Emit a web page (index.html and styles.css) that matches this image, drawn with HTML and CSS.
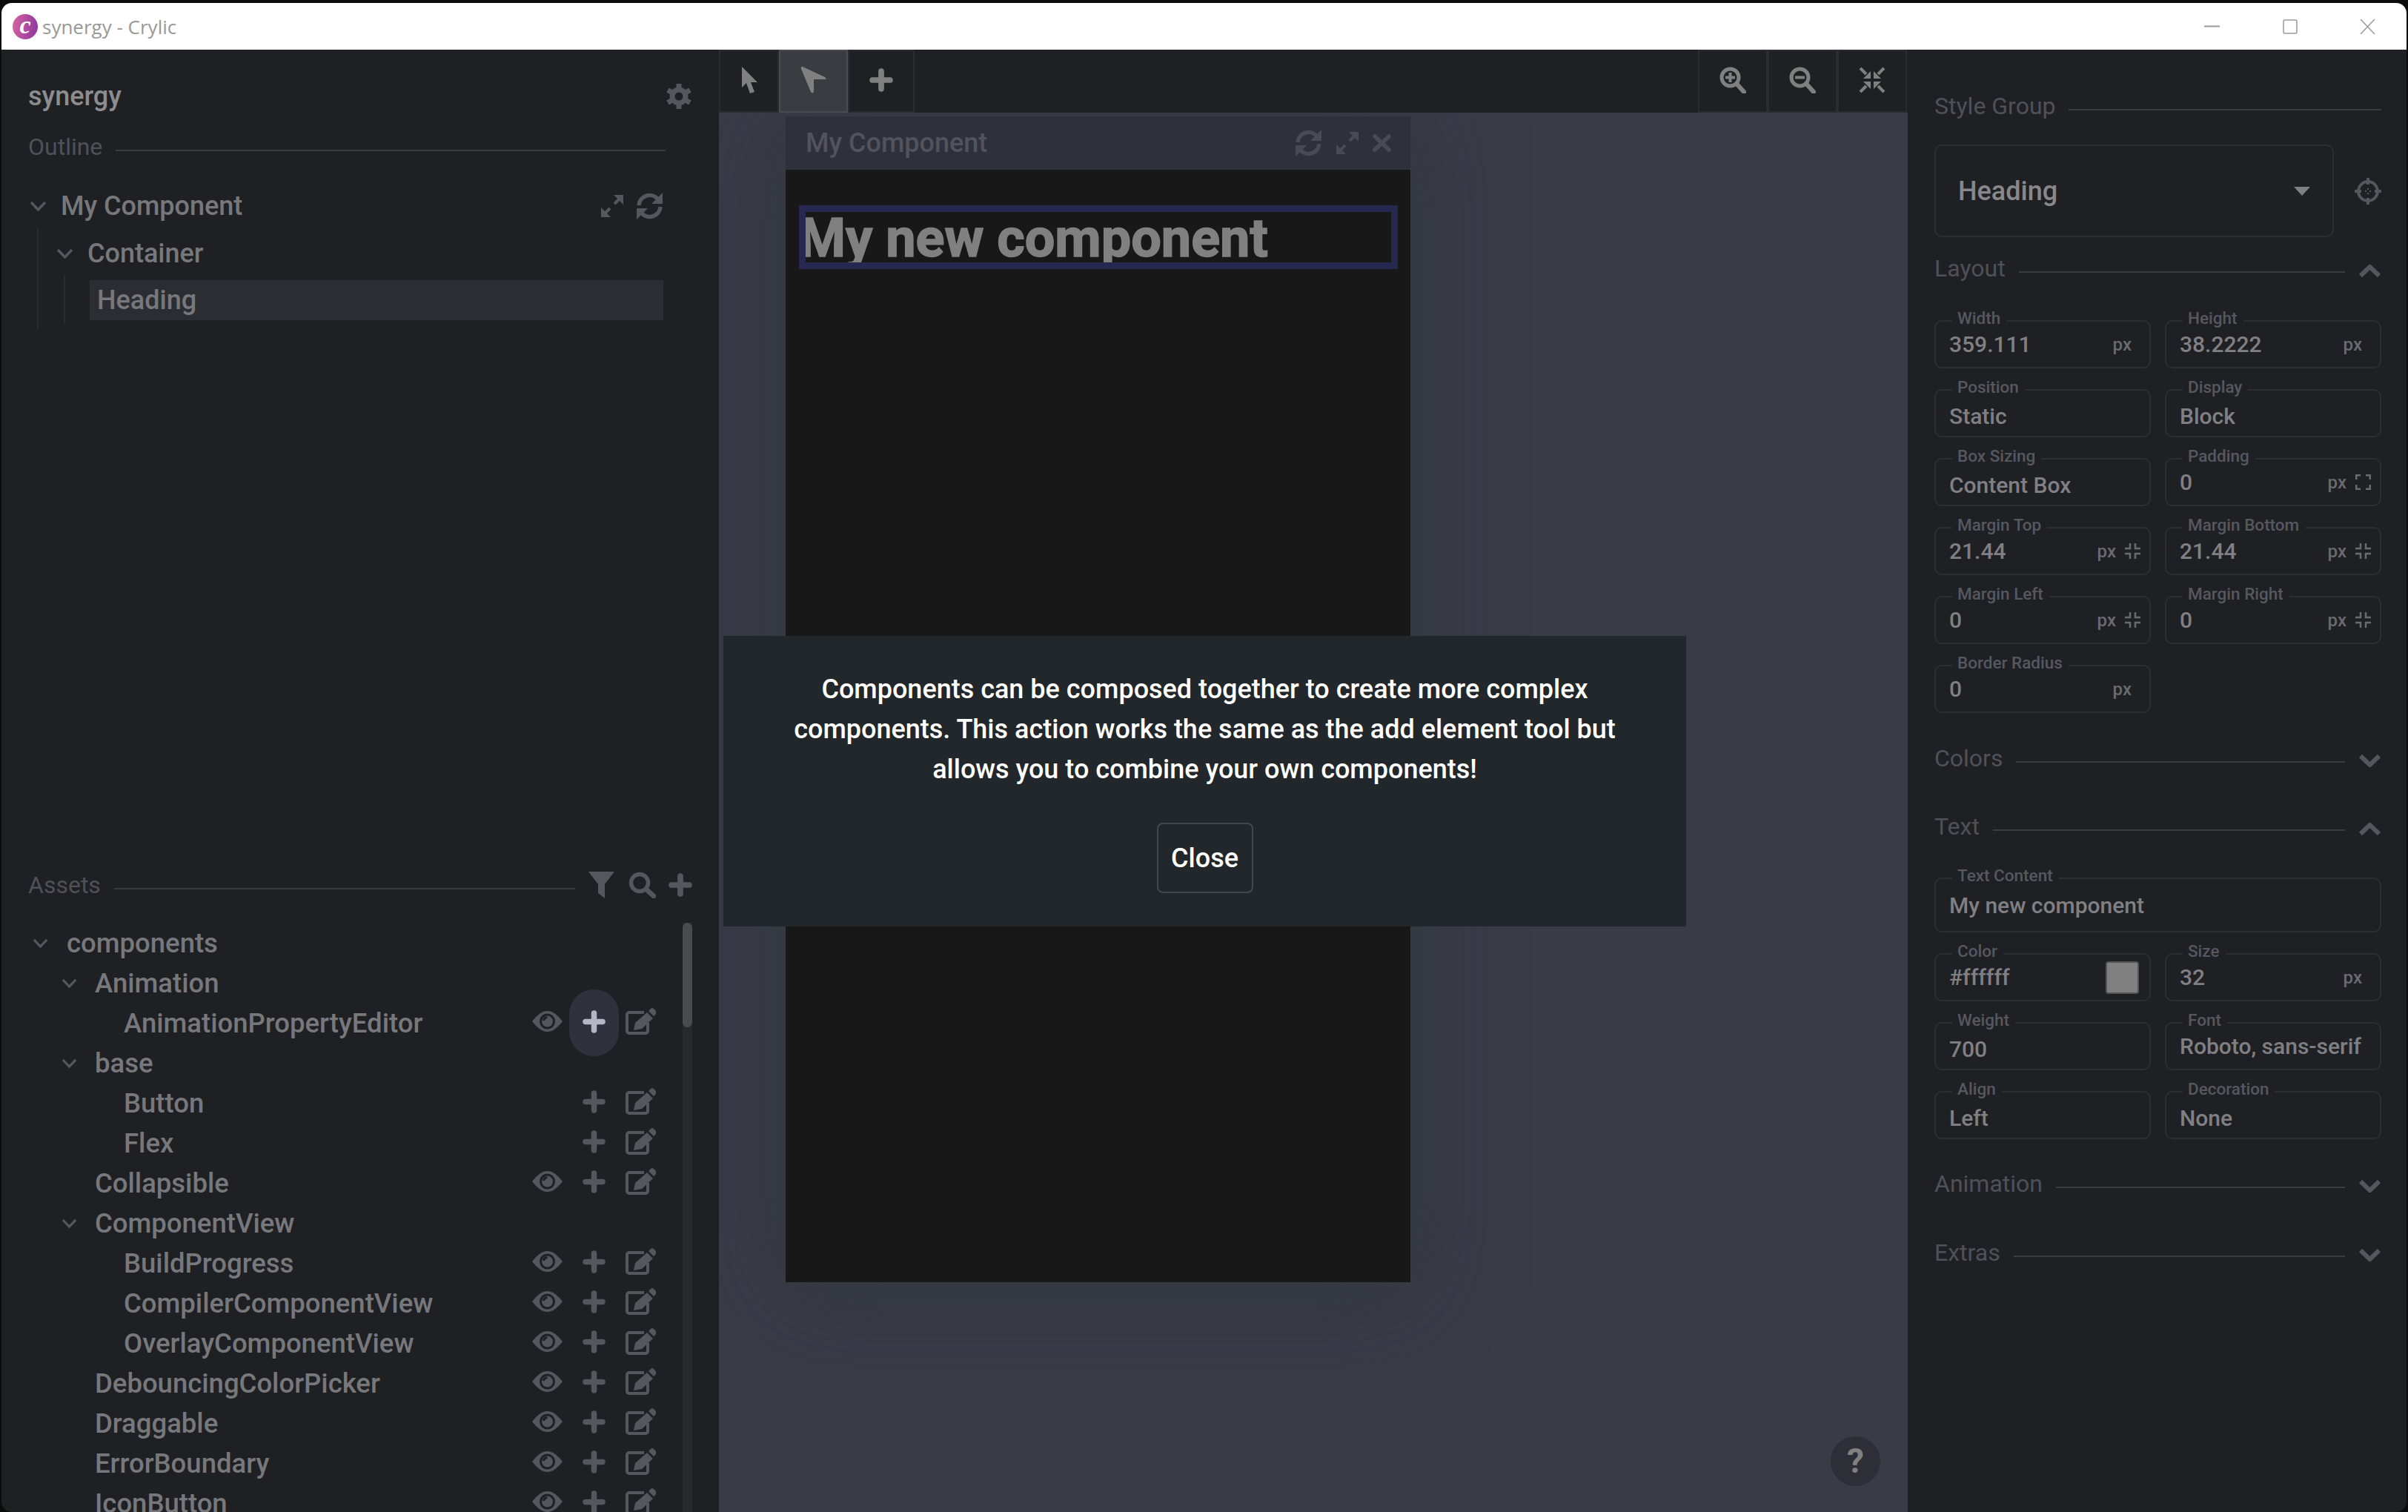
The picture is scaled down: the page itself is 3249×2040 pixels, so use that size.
FILE: index.html
```html
<!DOCTYPE html>
<html lang="en">
<head>
<meta charset="UTF-8">
<title>synergy - Crylic</title>
<link rel="stylesheet" href="styles.css">
</head>
<body>
<svg class="sprite" xmlns="http://www.w3.org/2000/svg">
    <symbol id="i-plus" viewBox="0 0 31 31"><path d="M15.5 4v23M4 15.5h23" fill="none" stroke="currentColor" stroke-width="7.5" stroke-linecap="round"/></symbol>
    <symbol id="i-eye" viewBox="0 0 41 28"><path d="M0 14C8 4 14 0 20.5 0S33 4 41 14C33 24 27 28 20.5 28S8 24 0 14Z" fill="currentColor"/><circle cx="20.5" cy="14" r="10.5" fill="#1f2024"/><circle cx="20.5" cy="14" r="7.5" fill="currentColor"/><path d="M14 13a6 6 0 0 1 6-6l1 3a4 4 0 0 0-4 3Z" fill="#1f2024"/></symbol>
    <symbol id="i-edit" viewBox="0 0 41 36"><path d="M25 6H5a3 3 0 0 0-3 3v22a3 3 0 0 0 3 3h22a3 3 0 0 0 3-3V20" fill="none" stroke="currentColor" stroke-width="4"/><path d="M11 30l2-10L29 6l8 8-15 14ZM31 4l3-3a3 3 0 0 1 4 0l3 3a3 3 0 0 1 0 4l-3 3Z" fill="currentColor"/></symbol>
    <symbol id="i-gear" viewBox="0 0 34 34"><path d="M17 0v7M17 27v7M2 8.500l6 3.500M26 22l6 3.500M2 25.500l6-3.500M26 12l6-3.500" fill="none" stroke="currentColor" stroke-width="7"/><circle cx="17" cy="17" r="9" fill="none" stroke="currentColor" stroke-width="7"/></symbol>
    <symbol id="i-expand" viewBox="0 0 32 32"><path d="M18 1h13v13ZM1 18v13h13Z" fill="currentColor"/><path d="M25 7l-6 6M7 25l6-6" fill="none" stroke="currentColor" stroke-width="4"/></symbol>
    <symbol id="i-sync" viewBox="0 0 37 36"><path d="M4 17A14.5 14.5 0 0 1 29 8M33 19A14.5 14.5 0 0 1 8 28" fill="none" stroke="currentColor" stroke-width="5.5"/><path d="M36 0v15H21ZM1 36V21h15Z" fill="currentColor"/></symbol>
    <symbol id="i-close" viewBox="0 0 25 24"><path d="M3 3l19 18M22 3L3 21" fill="none" stroke="currentColor" stroke-width="5.5" stroke-linecap="round"/></symbol>
    <symbol id="i-filter" viewBox="0 0 37 36"><path d="M1 0h35L23 17v19l-9-7V17Z" fill="currentColor"/></symbol>
    <symbol id="i-search" viewBox="0 0 37 36"><circle cx="15" cy="15" r="11.5" fill="none" stroke="currentColor" stroke-width="5.5"/><path d="M24 24l10 9" fill="none" stroke="currentColor" stroke-width="6.5" stroke-linecap="round"/></symbol>
    <symbol id="i-zoom-in" viewBox="0 0 36 36"><circle cx="14.5" cy="14.5" r="11.5" fill="none" stroke="currentColor" stroke-width="5"/><path d="M24 24l9 10" fill="none" stroke="currentColor" stroke-width="6" stroke-linecap="round"/><path d="M14.5 8v13M8 14.5h13" fill="none" stroke="currentColor" stroke-width="4"/></symbol>
    <symbol id="i-zoom-out" viewBox="0 0 36 36"><circle cx="14.5" cy="14.5" r="11.5" fill="none" stroke="currentColor" stroke-width="5"/><path d="M24 24l9 10" fill="none" stroke="currentColor" stroke-width="6" stroke-linecap="round"/><path d="M8 14.5h13" fill="none" stroke="currentColor" stroke-width="4"/></symbol>
    <symbol id="i-compress" viewBox="0 0 36 36"><path d="M16 16H6L16 6ZM20 16h10L20 6ZM16 20H6l10 10ZM20 20h10L20 30Z" fill="currentColor"/><path d="M2 2l8 8M34 2l-8 8M2 34l8-8M34 34l-8-8" fill="none" stroke="currentColor" stroke-width="4"/></symbol>
    <symbol id="i-cursor" viewBox="0 0 22 36"><path d="M1 0v28l6-6 5 14 6-2-5-13h9Z" fill="currentColor"/></symbol>
    <symbol id="i-arrow" viewBox="0 0 35 36"><path d="M1 3C0 0 3-1 5 1l28 13c2 2 2 3 0 3H18v16c0 3-3 3-4 1Z" fill="currentColor"/></symbol>
    <symbol id="i-target" viewBox="0 0 36 36"><circle cx="18" cy="18" r="13" fill="none" stroke="currentColor" stroke-width="4"/><path d="M18 0v9M18 27v9M0 18h9M27 18h9" fill="none" stroke="currentColor" stroke-width="4"/><path d="M18 14v2M18 20v2M14 18h2M20 18h2" fill="none" stroke="currentColor" stroke-width="2"/></symbol>
    <symbol id="i-up" viewBox="0 0 31 18"><path d="M3 15L15.5 3 28 15" fill="none" stroke="currentColor" stroke-width="6"/></symbol>
    <symbol id="i-down" viewBox="0 0 31 18"><path d="M3 3l12.5 12L28 3" fill="none" stroke="currentColor" stroke-width="6"/></symbol>
    <symbol id="i-chev" viewBox="0 0 23 14"><path d="M2 2l9.500 10L21 2" fill="none" stroke="currentColor" stroke-width="3.500"/></symbol>
    <symbol id="i-in" viewBox="0 0 21 21"><path d="M7 0v7H0M14 0v7h7M7 21v-7H0M14 21v-7h7" fill="none" stroke="currentColor" stroke-width="2.500"/></symbol>
    <symbol id="i-out" viewBox="0 0 21 21"><path d="M1 7V1h6M20 7V1h-6M1 14v6h6M20 14v6h-6" fill="none" stroke="currentColor" stroke-width="3"/></symbol>
</svg>

<div class="window">
    <div class="titlebar">
        <div class="logo">c</div>
        <span class="title-text">synergy - Crylic</span>
        <div class="win-controls">
            <div class="win-btn"><svg width="21" height="3"><path d="M0 1.500h21" stroke="#999" stroke-width="2"/></svg></div>
            <div class="win-btn"><svg width="20" height="20"><rect x="1" y="1" width="18" height="18" rx="2" fill="none" stroke="#999" stroke-width="1.500"/></svg></div>
            <div class="win-btn"><svg width="21" height="20"><path d="M1 0l19 20M20 0L1 20" stroke="#999" stroke-width="1.500"/></svg></div>
        </div>
    </div>

    <div class="app">
        <div class="sidebar">
            <div class="project">
                <span>synergy</span>
                <svg class="gear"><use href="#i-gear"/></svg>
            </div>
            <div class="section-title outline-title"><span>Outline</span><i class="rule"></i></div>
            <div class="outline">
                <div class="node">
                    <svg class="chev"><use href="#i-chev"/></svg><span>My Component</span>
                    <div class="node-icons">
                        <svg class="ic-expand"><use href="#i-expand"/></svg>
                        <svg class="ic-sync"><use href="#i-sync"/></svg>
                    </div>
                </div>
                <div class="children">
                    <div class="node">
                        <svg class="chev"><use href="#i-chev"/></svg><span>Container</span>
                    </div>
                    <div class="children inner">
                        <div class="node selected">Heading</div>
                    </div>
                </div>
            </div>

            <div class="assets">
                <div class="section-title assets-title">
                    <span>Assets</span><i class="rule"></i>
                    <svg class="ic-filter"><use href="#i-filter"/></svg>
                    <svg class="ic-search"><use href="#i-search"/></svg>
                    <svg class="ic-add"><use href="#i-plus"/></svg>
                </div>
                <div class="assets-body">
                    <div class="asset-list">
                        <div class="row depth0"><svg class="chev small"><use href="#i-chev"/></svg>components</div>
                        <div class="row depth1"><svg class="chev small"><use href="#i-chev"/></svg>Animation</div>
                        <div class="row depth2">AnimationPropertyEditor
                            <div class="actions">
                                <svg class="a-eye"><use href="#i-eye"/></svg>
                                <div class="a-add hover"><svg><use href="#i-plus"/></svg></div>
                                <svg class="a-edit"><use href="#i-edit"/></svg>
                            </div>
                        </div>
                        <div class="row depth1"><svg class="chev small"><use href="#i-chev"/></svg>base</div>
                        <div class="row depth2">Button
                            <div class="actions">
                                <div class="a-add"><svg><use href="#i-plus"/></svg></div>
                                <svg class="a-edit"><use href="#i-edit"/></svg>
                            </div>
                        </div>
                        <div class="row depth2">Flex
                            <div class="actions">
                                <div class="a-add"><svg><use href="#i-plus"/></svg></div>
                                <svg class="a-edit"><use href="#i-edit"/></svg>
                            </div>
                        </div>
                        <div class="row leaf1">Collapsible
                            <div class="actions">
                                <svg class="a-eye"><use href="#i-eye"/></svg>
                                <div class="a-add"><svg><use href="#i-plus"/></svg></div>
                                <svg class="a-edit"><use href="#i-edit"/></svg>
                            </div>
                        </div>
                        <div class="row depth1"><svg class="chev small"><use href="#i-chev"/></svg>ComponentView</div>
                        <div class="row depth2">BuildProgress
                            <div class="actions">
                                <svg class="a-eye"><use href="#i-eye"/></svg>
                                <div class="a-add"><svg><use href="#i-plus"/></svg></div>
                                <svg class="a-edit"><use href="#i-edit"/></svg>
                            </div>
                        </div>
                        <div class="row depth2">CompilerComponentView
                            <div class="actions">
                                <svg class="a-eye"><use href="#i-eye"/></svg>
                                <div class="a-add"><svg><use href="#i-plus"/></svg></div>
                                <svg class="a-edit"><use href="#i-edit"/></svg>
                            </div>
                        </div>
                        <div class="row depth2">OverlayComponentView
                            <div class="actions">
                                <svg class="a-eye"><use href="#i-eye"/></svg>
                                <div class="a-add"><svg><use href="#i-plus"/></svg></div>
                                <svg class="a-edit"><use href="#i-edit"/></svg>
                            </div>
                        </div>
                        <div class="row leaf1">DebouncingColorPicker
                            <div class="actions">
                                <svg class="a-eye"><use href="#i-eye"/></svg>
                                <div class="a-add"><svg><use href="#i-plus"/></svg></div>
                                <svg class="a-edit"><use href="#i-edit"/></svg>
                            </div>
                        </div>
                        <div class="row leaf1">Draggable
                            <div class="actions">
                                <svg class="a-eye"><use href="#i-eye"/></svg>
                                <div class="a-add"><svg><use href="#i-plus"/></svg></div>
                                <svg class="a-edit"><use href="#i-edit"/></svg>
                            </div>
                        </div>
                        <div class="row leaf1">ErrorBoundary
                            <div class="actions">
                                <svg class="a-eye"><use href="#i-eye"/></svg>
                                <div class="a-add"><svg><use href="#i-plus"/></svg></div>
                                <svg class="a-edit"><use href="#i-edit"/></svg>
                            </div>
                        </div>
                        <div class="row leaf1">IconButton
                            <div class="actions">
                                <svg class="a-eye"><use href="#i-eye"/></svg>
                                <div class="a-add"><svg><use href="#i-plus"/></svg></div>
                                <svg class="a-edit"><use href="#i-edit"/></svg>
                            </div>
                        </div>
                    </div>
                    <div class="scrollbar"><div class="thumb"></div></div>
                </div>
            </div>
        </div>

        <div class="main">
            <div class="toolbar">
                <div class="tools">
                    <div class="tool w80"><svg class="t-cursor"><use href="#i-cursor"/></svg></div>
                    <div class="tool w93 active"><svg class="t-arrow"><use href="#i-arrow"/></svg></div>
                    <div class="tool w90"><svg class="t-plus"><use href="#i-plus"/></svg></div>
                </div>
                <div class="tools view-tools">
                    <div class="tool w94"><svg class="t-zoom"><use href="#i-zoom-in"/></svg></div>
                    <div class="tool w94"><svg class="t-zoom"><use href="#i-zoom-out"/></svg></div>
                    <div class="tool w94"><svg class="t-zoom"><use href="#i-compress"/></svg></div>
                </div>
            </div>
            <div class="canvas">
                <div class="frame">
                    <div class="frame-head">
                        <span>My Component</span>
                        <div class="frame-icons">
                            <svg class="ic-sync"><use href="#i-sync"/></svg>
                            <svg class="ic-expand"><use href="#i-expand"/></svg>
                            <svg class="ic-close"><use href="#i-close"/></svg>
                        </div>
                    </div>
                    <div class="frame-body">
                        <div class="heading-box">
                            <h1>My new component</h1>
                            <div class="select-outline"></div>
                        </div>
                    </div>
                </div>

                <div class="dialog">
                    <p>Components can be composed together to create more complex<br>components. This action works the same as the add element tool but<br>allows you to combine your own components!</p>
                    <button class="close-btn">Close</button>
                </div>

                <div class="help">?</div>
            </div>
        </div>

        <div class="props">
            <div class="section-title"><span>Style Group</span><i class="rule"></i></div>
            <div class="style-group">
                <div class="select-box">Heading<b class="caret"></b></div>
                <svg class="ic-target"><use href="#i-target"/></svg>
            </div>

            <div class="section-title layout-title"><span>Layout</span><i class="rule"></i><svg class="chevron"><use href="#i-up"/></svg></div>
            <div class="fields">
                <div class="field"><label>Width</label><span class="val">359.111</span><span class="unit">px</span></div>
                <div class="field"><label>Height</label><span class="val">38.2222</span><span class="unit">px</span></div>
                <div class="field choice"><label>Position</label><span class="val">Static</span></div>
                <div class="field choice"><label>Display</label><span class="val">Block</span></div>
                <div class="field choice"><label>Box Sizing</label><span class="val">Content Box</span></div>
                <div class="field with-icon"><label>Padding</label><span class="val">0</span><span class="unit">px</span><svg class="mini"><use href="#i-out"/></svg></div>
                <div class="field with-icon"><label>Margin Top</label><span class="val">21.44</span><span class="unit">px</span><svg class="mini"><use href="#i-in"/></svg></div>
                <div class="field with-icon"><label>Margin Bottom</label><span class="val">21.44</span><span class="unit">px</span><svg class="mini"><use href="#i-in"/></svg></div>
                <div class="field with-icon"><label>Margin Left</label><span class="val">0</span><span class="unit">px</span><svg class="mini"><use href="#i-in"/></svg></div>
                <div class="field with-icon"><label>Margin Right</label><span class="val">0</span><span class="unit">px</span><svg class="mini"><use href="#i-in"/></svg></div>
                <div class="field"><label>Border Radius</label><span class="val">0</span><span class="unit">px</span></div>
            </div>

            <div class="section-title colors-title"><span>Colors</span><i class="rule"></i><svg class="chevron down"><use href="#i-down"/></svg></div>
            <div class="section-title text-title"><span>Text</span><i class="rule"></i><svg class="chevron"><use href="#i-up"/></svg></div>
            <div class="fields">
                <div class="field wide"><label>Text Content</label><span class="val">My new component</span></div>
                <div class="field"><label>Color</label><span class="val">#ffffff</span><b class="swatch"></b></div>
                <div class="field"><label>Size</label><span class="val">32</span><span class="unit">px</span></div>
                <div class="field choice"><label>Weight</label><span class="val">700</span></div>
                <div class="field"><label>Font</label><span class="val">Roboto, sans-serif</span></div>
                <div class="field choice"><label>Align</label><span class="val">Left</span></div>
                <div class="field choice"><label>Decoration</label><span class="val">None</span></div>
            </div>

            <div class="section-title animation-title"><span>Animation</span><i class="rule"></i><svg class="chevron down"><use href="#i-down"/></svg></div>
            <div class="section-title extras-title"><span>Extras</span><i class="rule"></i><svg class="chevron down"><use href="#i-down"/></svg></div>
        </div>
    </div>
</div>
</body>
</html>
```

FILE: styles.css
```css
* {
    box-sizing: border-box;
}
html, body {
    margin: 0;
    height: 2040px;
    overflow: hidden;
}
body {
    background-color: #0c0c0d;
    padding: 4px 2px 0;
    font-family: Roboto, sans-serif;
    font-size: 36px;
    font-weight: 500;
    color: #77787c;
}
.sprite {
    display: none;
}
svg {
    display: block;
    flex-shrink: 0;
}

.window {
    height: 2036px;
    border-radius: 14px;
    overflow: hidden;
    display: flex;
    flex-direction: column;
    background-color: #1f2024;
}

/* title bar */
.titlebar {
    height: 63px;
    flex-shrink: 0;
    background-color: #fff;
    display: flex;
    align-items: center;
    padding-left: 15px;
}
.logo {
    width: 34px;
    height: 34px;
    border-radius: 50%;
    background: linear-gradient(100deg, #d9669f, #8a33a0);
    color: #fff;
    font-family: "Liberation Serif", serif;
    font-style: italic;
    font-weight: 700;
    font-size: 34px;
    line-height: 29px;
    text-align: center;
}
.title-text {
    margin-left: 6px;
    font-family: "Open Sans", sans-serif;
    font-size: 26px;
    font-weight: 400;
    color: #999;
}
.win-controls {
    margin-left: auto;
    display: flex;
}
.win-btn {
    width: 105px;
    height: 63px;
    display: flex;
    align-items: center;
    justify-content: center;
}

.app {
    flex: 1;
    display: flex;
    min-height: 0;
}

/* left sidebar */
.sidebar {
    width: 968px;
    flex-shrink: 0;
    display: flex;
    flex-direction: column;
    padding-left: 36px;
}
.project {
    height: 54px;
    margin-top: 36px;
    margin-bottom: -2px;
    padding-right: 37px;
    display: flex;
    align-items: center;
    justify-content: space-between;
    color: #8d8d90;
}
.gear {
    width: 34px;
    height: 34px;
    color: #55575e;
}
.section-title {
    height: 44px;
    display: flex;
    align-items: center;
    font-size: 32px;
    font-weight: 400;
    color: #4f5159;
}
.rule {
    flex: 1;
    height: 2px;
    margin: 10px 0 0 18px;
    background-color: #3a3c43;
}
.outline-title {
    margin-top: 21px;
    padding-right: 72px;
}
.outline {
    margin-top: 31px;
    padding-right: 75px;
    flex: 1;
}
.node {
    height: 54px;
    display: flex;
    align-items: center;
}
.chev {
    width: 23px;
    height: 14px;
    margin: 0 19px 0 2px;
    color: #55575e;
}
.chev.small {
    width: 21px;
    height: 13px;
    margin: 0 0 0 0;
    color: #55575e;
}
.node-icons {
    margin-left: auto;
    display: flex;
    align-items: center;
    gap: 16px;
    color: #55575e;
}
.ic-expand {
    width: 32px;
    height: 32px;
}
.ic-sync {
    width: 37px;
    height: 36px;
}
.children {
    margin: 3px 0 0 12px;
    padding: 6.500px 0 6px 22px;
    border-left: 2px solid #2b2c31;
}
.children.inner {
    margin: 2.500px 0 0 12px;
    padding: 7px 0 5px 33px;
}
.selected {
    background-color: #2c2d33;
    padding-left: 10px;
}

/* assets */
.assets {
    height: 868px;
    display: flex;
    flex-direction: column;
    flex-shrink: 0;
}
.assets-title {
    flex-shrink: 0;
    padding-right: 36px;
}
.assets-title .rule {
    margin-right: 17px;
}
.ic-filter,
.ic-search {
    width: 37px;
    height: 36px;
    color: #55575e;
}
.ic-search {
    margin-left: 18px;
}
.ic-add {
    width: 32px;
    height: 32px;
    margin-left: 17px;
    color: #55575e;
}
.assets-body {
    flex: 1;
    min-height: 0;
    margin-top: 29px;
    margin-left: -36px;
    display: flex;
    overflow: hidden;
}
.asset-list {
    width: 919px;
    font-size: 36.500px;
}
.row {
    height: 54px;
    display: flex;
    align-items: center;
    white-space: nowrap;
}
.depth0 {
    padding-left: 42px;
}
.depth0 .chev {
    margin-right: 25px;
}
.depth1 {
    padding-left: 81px;
}
.depth1 .chev {
    margin-right: 24px;
}
.depth2 {
    padding-left: 165px;
}
.leaf1 {
    padding-left: 126px;
}
.actions {
    margin-left: auto;
    padding-right: 36px;
    display: flex;
    align-items: center;
    color: #55575e;
}
.a-eye {
    width: 41px;
    height: 28px;
    margin: 0 9px 4px 0;
}
.a-add {
    width: 67px;
    height: 90px;
    margin: -18px 0;
    border-radius: 33px;
    display: flex;
    align-items: center;
    justify-content: center;
}
.a-add svg {
    width: 31px;
    height: 31px;
    margin-bottom: 4px;
}
.a-add.hover {
    background-color: #2f313c;
    color: #b4b6c4;
}
.a-edit {
    width: 41px;
    height: 36px;
    margin: 0 0 4px 9px;
}
.scrollbar {
    width: 13px;
    background-color: #28292d;
}
.thumb {
    height: 141px;
    border-radius: 7px;
    background-color: #4a4b50;
}

/* center */
.main {
    flex: 1;
    min-width: 0;
    display: flex;
    flex-direction: column;
}
.toolbar {
    height: 85px;
    flex-shrink: 0;
    display: flex;
    justify-content: space-between;
}
.tools {
    display: flex;
}
.view-tools {
    padding-right: 1px;
}
.tool {
    border: 2px solid #2b2c31;
    padding-bottom: 4px;
    display: flex;
    align-items: center;
    justify-content: center;
    color: #808080;
}
.tool.active {
    background-color: #3a3c42;
    border-color: #4a4b50;
}
.w80 {
    width: 81px;
}
.w90 {
    width: 90px;
}
.w93 {
    width: 93px;
}
.w94 {
    width: 94px;
}
.t-cursor {
    width: 22px;
    height: 36px;
}
.t-arrow {
    width: 35px;
    height: 36px;
}
.t-plus {
    width: 32px;
    height: 32px;
}
.t-zoom {
    width: 36px;
    height: 36px;
}
.canvas {
    flex: 1;
    position: relative;
    background-color: #393b47;
    overflow: hidden;
}
.frame {
    position: absolute;
    left: 90px;
    top: 5px;
    width: 843px;
    height: 1573px;
    box-shadow: 0 10px 110px rgba(45, 55, 55, 0.55);
    display: flex;
    flex-direction: column;
}
.frame-head {
    height: 72px;
    flex-shrink: 0;
    background-color: #2e303b;
    display: flex;
    align-items: center;
    justify-content: space-between;
    padding: 0 26px 0 27px;
    color: #52535c;
}
.frame-icons {
    display: flex;
    align-items: center;
    color: #484a54;
    gap: 18px;
}
.ic-close {
    width: 25px;
    height: 24px;
}
.frame-body {
    flex: 1;
    background-color: #181818;
    padding: 48px 17px 0 18px;
}
.heading-box {
    position: relative;
    height: 86px;
}
.heading-box h1 {
    margin: 0;
    font-size: 72px;
    line-height: 90px;
    font-weight: 700;
    color: #808080;
    white-space: nowrap;
    -webkit-text-stroke: 1.5px #808080;
}
.select-outline {
    position: absolute;
    inset: 0;
    border: 9px solid #26284f;
}
.dialog {
    position: absolute;
    left: 6px;
    top: 706px;
    width: 1299px;
    height: 392px;
    background-color: #22272b;
    color: #fff;
    display: flex;
    flex-direction: column;
    align-items: center;
}
.dialog p {
    margin: 45px 0 45px;
    line-height: 54px;
    text-align: center;
}
.close-btn {
    width: 130px;
    height: 95px;
    background-color: transparent;
    border: 2px solid #44484c;
    border-radius: 8px;
    color: #fff;
    font-family: Roboto, sans-serif;
    font-size: 36px;
    font-weight: 500;
}
.help {
    position: absolute;
    right: 37px;
    bottom: 35px;
    width: 67px;
    height: 67px;
    border-radius: 50%;
    background-color: #2d2e36;
    color: #808080;
    font-size: 46px;
    font-weight: 700;
    line-height: 67px;
    text-align: center;
}

/* right panel */
.props {
    width: 673px;
    flex-shrink: 0;
    padding: 54px 34px 0 36px;
}
.style-group {
    margin-top: 30px;
    display: flex;
    align-items: center;
    justify-content: space-between;
    color: #55575e;
}
.select-box {
    width: 539px;
    height: 125px;
    border: 2px solid #2d2e33;
    border-radius: 10px;
    padding: 0 30px;
    display: flex;
    align-items: center;
    justify-content: space-between;
    color: #88888a;
}
.caret {
    border-left: 11px solid transparent;
    border-right: 11px solid transparent;
    border-top: 12px solid #808080;
}
.ic-target {
    width: 36px;
    height: 36px;
}
.chevron {
    width: 31px;
    height: 18px;
    margin: 8px 0 0 18px;
    color: #55575e;
}
.chevron.down {
    margin-top: 5px;
}
.layout-title {
    margin-top: 20px;
}
.colors-title {
    margin-top: 39px;
}
.text-title {
    margin-top: 48px;
}
.animation-title {
    margin-top: 38px;
}
.extras-title {
    margin-top: 49px;
}
.fields {
    margin-top: 48px;
    display: grid;
    grid-template-columns: 292px 292px;
    column-gap: 19px;
    row-gap: 28px;
}
.text-title + .fields {
    margin-top: 47px;
}
.field {
    position: relative;
    height: 65px;
    border: 2px solid #2d2e33;
    border-radius: 10px;
    padding: 0 24px 0 18px;
    display: flex;
    align-items: center;
    justify-content: space-between;
    font-size: 30px;
    color: #808084;
}
.field label {
    position: absolute;
    left: 22px;
    top: -19px;
    padding: 0 8px 0 7px;
    background-color: #1f2024;
    font-size: 22.500px;
    font-weight: 500;
    line-height: 28px;
    color: #565860;
}
.field.choice .val {
    margin-top: 8px;
}
.field.wide {
    grid-column: span 2;
    height: 74px;
}
.field.wide .val {
    margin-top: 1px;
}
.unit {
    font-size: 24px;
    color: #6a6b70;
}
.field.with-icon {
    padding-right: 12px;
}
.with-icon .unit {
    margin-left: auto;
    margin-right: 12px;
}
.mini {
    width: 21px;
    height: 21px;
    color: #6a6b70;
}
.swatch {
    width: 45px;
    height: 44px;
    margin-right: -10px;
    background-color: #808080;
    border: 2px solid #555;
    border-radius: 4px;
}
```
